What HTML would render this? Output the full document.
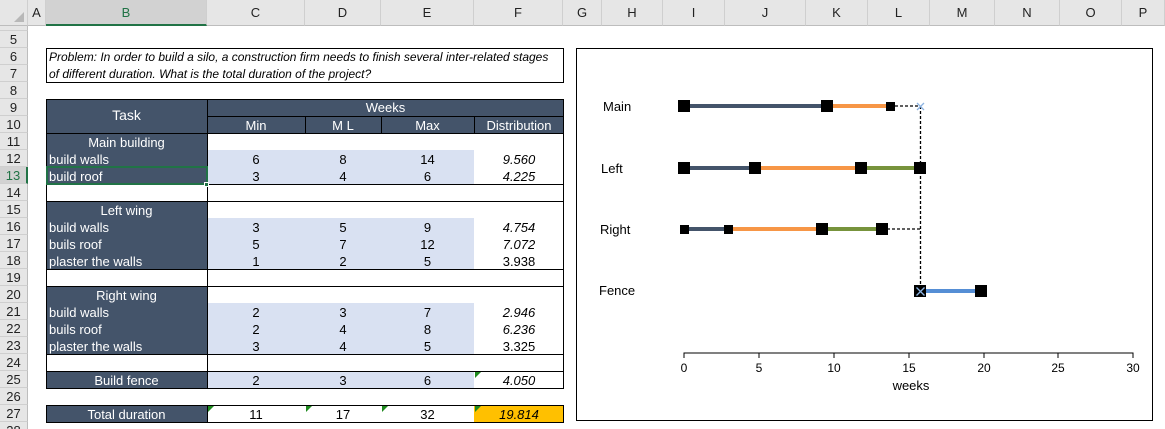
<!DOCTYPE html>
<html><head><meta charset="utf-8"><style>
html,body{margin:0;width:1165px;height:429px;overflow:hidden;background:#fff;font-family:"Liberation Sans",Arial,sans-serif;position:relative}
div{position:absolute;box-sizing:border-box}
.ch{top:0;height:26px;background:#e6e6e6;border-right:1px solid #cfcfcf;border-bottom:1px solid #bdbdbd;font-size:13px;line-height:25px;text-align:center;color:#222}
.rh{left:0;width:28px;height:17px;background:#e6e6e6;border-bottom:1px solid #cfcfcf;border-right:1px solid #bdbdbd;font-size:13px;line-height:17px;text-align:center;color:#222;overflow:hidden}
.dk{background:#44546a;color:#fff}
.lt{background:#d9e1f2}
.t{font-size:13px;line-height:17px;height:17px;color:#000}
.w{color:#fff}
.c{text-align:center}
.i{font-style:italic}
.bx{border:1px solid #000}
.tri{width:0;height:0;border-top:6px solid #1e8a1e;border-right:6px solid transparent}
</style></head><body>
<div class="ch" style="left:0;width:28px"></div>
<div class="ch" style="left:28px;width:18px">A</div>
<div class="ch" style="left:46px;width:161px;background:#d2d2d2;border-bottom:2px solid #217346;color:#217346">B</div>
<div class="ch" style="left:207px;width:98px">C</div>
<div class="ch" style="left:305px;width:76px">D</div>
<div class="ch" style="left:381px;width:93px">E</div>
<div class="ch" style="left:474px;width:89px">F</div>
<div class="ch" style="left:563px;width:39px">G</div>
<div class="ch" style="left:602px;width:61px">H</div>
<div class="ch" style="left:663px;width:62px">I</div>
<div class="ch" style="left:725px;width:81px">J</div>
<div class="ch" style="left:806px;width:62px">K</div>
<div class="ch" style="left:868px;width:62px">L</div>
<div class="ch" style="left:930px;width:65px">M</div>
<div class="ch" style="left:995px;width:65px">N</div>
<div class="ch" style="left:1060px;width:62px">O</div>
<div class="ch" style="left:1122px;width:43px">P</div>
<div style="left:14px;top:12px;width:0;height:0;border-left:10px solid transparent;border-bottom:10px solid #b8b8b8"></div>
<div class="rh" style="top:26px;height:5px"></div>
<div class="rh" style="top:31px">5</div><div class="rh" style="top:48px">6</div><div class="rh" style="top:65px">7</div><div class="rh" style="top:82px">8</div><div class="rh" style="top:99px">9</div><div class="rh" style="top:116px">10</div><div class="rh" style="top:133px">11</div><div class="rh" style="top:150px">12</div><div class="rh" style="top:167px;background:#d2d2d2;color:#217346;border-right:2px solid #217346">13</div><div class="rh" style="top:184px">14</div><div class="rh" style="top:201px">15</div><div class="rh" style="top:218px">16</div><div class="rh" style="top:235px">17</div><div class="rh" style="top:252px">18</div><div class="rh" style="top:269px">19</div><div class="rh" style="top:286px">20</div><div class="rh" style="top:303px">21</div><div class="rh" style="top:320px">22</div><div class="rh" style="top:337px">23</div><div class="rh" style="top:354px">24</div><div class="rh" style="top:371px">25</div><div class="rh" style="top:388px">26</div><div class="rh" style="top:405px">27</div><div class="rh" style="top:422px;height:7px;border-bottom:none">28</div>

<div class="bx" style="left:46px;top:48px;width:518px;height:35px;font-style:italic;font-size:12px;line-height:17px;padding-left:2px;white-space:nowrap">Problem: In order to build a silo, a construction firm needs to finish several inter-related stages<br>of different duration. What is the total duration of the project?</div>

<div class="dk bx" style="left:46px;top:99px;width:518px;height:35px"></div>
<div style="left:207px;top:99px;width:1px;height:35px;background:#000"></div>
<div style="left:207px;top:116px;width:357px;height:1px;background:#000"></div>
<div style="left:305px;top:116px;width:1px;height:17px;background:#000"></div>
<div style="left:381px;top:116px;width:1px;height:17px;background:#000"></div>
<div style="left:474px;top:116px;width:1px;height:17px;background:#000"></div>
<div class="t w c" style="left:46px;top:107px;width:161px;font-size:14px">Task</div>
<div class="t w c" style="left:207px;top:99px;width:357px">Weeks</div>
<div class="t w c" style="left:207px;top:117px;width:98px">Min</div>
<div class="t w c" style="left:305px;top:117px;width:76px">M L</div>
<div class="t w c" style="left:381px;top:117px;width:93px">Max</div>
<div class="t w c" style="left:474px;top:117px;width:90px">Distribution</div>

<div class="dk" style="left:46px;top:133px;width:161px;height:51px"></div>
<div class="lt" style="left:207px;top:150px;width:267px;height:34px"></div>
<div class="bx" style="left:46px;top:133px;width:518px;height:52px;background:transparent"></div>
<div class="bx" style="left:46px;top:184px;width:518px;height:18px"></div>
<div class="dk" style="left:46px;top:201px;width:161px;height:68px"></div>
<div class="lt" style="left:207px;top:218px;width:267px;height:51px"></div>
<div class="bx" style="left:46px;top:201px;width:518px;height:69px;background:transparent"></div>
<div class="bx" style="left:46px;top:269px;width:518px;height:18px"></div>
<div class="dk" style="left:46px;top:286px;width:161px;height:68px"></div>
<div class="lt" style="left:207px;top:303px;width:267px;height:51px"></div>
<div class="bx" style="left:46px;top:286px;width:518px;height:69px;background:transparent"></div>
<div class="bx" style="left:46px;top:354px;width:518px;height:18px"></div>
<div class="dk" style="left:46px;top:371px;width:161px;height:17px"></div>
<div class="lt" style="left:207px;top:371px;width:267px;height:17px"></div>
<div class="bx" style="left:46px;top:371px;width:518px;height:18px;background:transparent"></div>
<div class="dk" style="left:46px;top:405px;width:161px;height:17px"></div>
<div style="left:474px;top:405px;width:90px;height:17px;background:#ffc000"></div>
<div class="bx" style="left:46px;top:405px;width:518px;height:18px;background:transparent"></div>
<div style="left:207px;top:133px;width:1px;height:289px;background:#000"></div>
<div style="left:46px;top:389px;width:520px;height:16px;background:#fff"></div>

<div class="t w c" style="left:46px;top:134px;width:161px">Main building</div>
<div class="t w" style="left:49px;top:151px">build walls</div>
<div class="t w" style="left:49px;top:168px">build roof</div>
<div class="t w c" style="left:46px;top:202px;width:161px">Left wing</div>
<div class="t w" style="left:49px;top:219px">build walls</div>
<div class="t w" style="left:49px;top:236px">buils roof</div>
<div class="t w" style="left:49px;top:253px">plaster the walls</div>
<div class="t w c" style="left:46px;top:287px;width:161px">Right wing</div>
<div class="t w" style="left:49px;top:304px">build walls</div>
<div class="t w" style="left:49px;top:321px">buils roof</div>
<div class="t w" style="left:49px;top:338px">plaster the walls</div>
<div class="t w c" style="left:46px;top:372px;width:161px">Build fence</div>
<div class="t w c" style="left:46px;top:406px;width:161px">Total duration</div>
<div style="left:46px;top:166px;width:162px;height:19px;border:2px solid #217346"></div>
<div style="left:204px;top:182px;width:5px;height:5px;background:#217346;border:1px solid #fff"></div>

<div class="t c" style="left:207px;top:151px;width:98px">6</div><div class="t c" style="left:305px;top:151px;width:76px">8</div><div class="t c" style="left:381px;top:151px;width:93px">14</div><div class="t c i" style="left:474px;top:151px;width:90px">9.560</div>
<div class="t c" style="left:207px;top:168px;width:98px">3</div><div class="t c" style="left:305px;top:168px;width:76px">4</div><div class="t c" style="left:381px;top:168px;width:93px">6</div><div class="t c i" style="left:474px;top:168px;width:90px">4.225</div>
<div class="t c" style="left:207px;top:219px;width:98px">3</div><div class="t c" style="left:305px;top:219px;width:76px">5</div><div class="t c" style="left:381px;top:219px;width:93px">9</div><div class="t c i" style="left:474px;top:219px;width:90px">4.754</div>
<div class="t c" style="left:207px;top:236px;width:98px">5</div><div class="t c" style="left:305px;top:236px;width:76px">7</div><div class="t c" style="left:381px;top:236px;width:93px">12</div><div class="t c i" style="left:474px;top:236px;width:90px">7.072</div>
<div class="t c" style="left:207px;top:253px;width:98px">1</div><div class="t c" style="left:305px;top:253px;width:76px">2</div><div class="t c" style="left:381px;top:253px;width:93px">5</div><div class="t c" style="left:474px;top:253px;width:90px">3.938</div>
<div class="t c" style="left:207px;top:304px;width:98px">2</div><div class="t c" style="left:305px;top:304px;width:76px">3</div><div class="t c" style="left:381px;top:304px;width:93px">7</div><div class="t c i" style="left:474px;top:304px;width:90px">2.946</div>
<div class="t c" style="left:207px;top:321px;width:98px">2</div><div class="t c" style="left:305px;top:321px;width:76px">4</div><div class="t c" style="left:381px;top:321px;width:93px">8</div><div class="t c i" style="left:474px;top:321px;width:90px">6.236</div>
<div class="t c" style="left:207px;top:338px;width:98px">3</div><div class="t c" style="left:305px;top:338px;width:76px">4</div><div class="t c" style="left:381px;top:338px;width:93px">5</div><div class="t c" style="left:474px;top:338px;width:90px">3.325</div>
<div class="t c" style="left:207px;top:372px;width:98px">2</div><div class="t c" style="left:305px;top:372px;width:76px">3</div><div class="t c" style="left:381px;top:372px;width:93px">6</div><div class="t c i" style="left:474px;top:372px;width:90px">4.050</div>
<div class="t c" style="left:207px;top:406px;width:98px">11</div><div class="t c" style="left:305px;top:406px;width:76px">17</div><div class="t c" style="left:381px;top:406px;width:93px">32</div><div class="t c i" style="left:474px;top:406px;width:90px">19.814</div>
<div class="tri" style="left:475px;top:372px"></div>
<div class="tri" style="left:208px;top:406px"></div><div class="tri" style="left:306px;top:406px"></div><div class="tri" style="left:382px;top:406px"></div><div class="tri" style="left:475px;top:406px"></div>

<div class="bx" style="left:576px;top:48px;width:577px;height:373px"></div>
<svg style="position:absolute;left:0;top:0" width="1165" height="429" font-family="Liberation Sans, Arial, sans-serif" font-size="13">
<text x="603" y="111">Main</text><text x="601" y="173">Left</text><text x="600" y="234">Right</text><text x="599" y="295">Fence</text>
<g stroke="#000" stroke-width="1.3" stroke-dasharray="3,2" fill="none">
<path d="M890 106H920M882 229H920M920.5 106V291"/></g>
<g stroke-width="4" fill="none">
<path d="M684 106H827" stroke="#44546a"/><path d="M827 106H890" stroke="#f79646"/>
<path d="M684 168H755" stroke="#44546a"/><path d="M755 168H861" stroke="#f79646"/><path d="M861 168H920" stroke="#77933c"/>
<path d="M684 229H728" stroke="#44546a"/><path d="M728 229H822" stroke="#f79646"/><path d="M822 229H881" stroke="#77933c"/>
<path d="M920 291H981" stroke="#558ed5"/></g>
<g fill="#000">
<rect x="678" y="100" width="12" height="12"/><rect x="821" y="100" width="12" height="12"/><rect x="886" y="102" width="9" height="9"/>
<rect x="678" y="162" width="12" height="12"/><rect x="749" y="162" width="12" height="12"/><rect x="855" y="162" width="12" height="12"/><rect x="914" y="162" width="12" height="12"/>
<rect x="680" y="225" width="9" height="9"/><rect x="724" y="225" width="9" height="9"/><rect x="816" y="223" width="12" height="12"/><rect x="876" y="223" width="12" height="12"/>
<rect x="914" y="285" width="12" height="12"/><rect x="975" y="285" width="12" height="12"/></g>
<path d="M917 103l7 7M924 103l-7 7M916.5 287.5l8 8M924.5 287.5l-8 8" stroke="#8db4e2" stroke-width="1.3"/>
<path d="M684 358V353H1133V358M759 353v5M834 353v5M909 353v5M984 353v5M1058 353v5" stroke="#000" stroke-width="1" fill="none"/>
<g text-anchor="middle" font-size="12"><text x="684" y="372">0</text><text x="759" y="372">5</text><text x="834" y="372">10</text><text x="909" y="372">15</text><text x="984" y="372">20</text><text x="1058" y="372">25</text><text x="1133" y="372">30</text>
<text x="911" y="390" font-size="13">weeks</text></g>
</svg>
</body></html>
